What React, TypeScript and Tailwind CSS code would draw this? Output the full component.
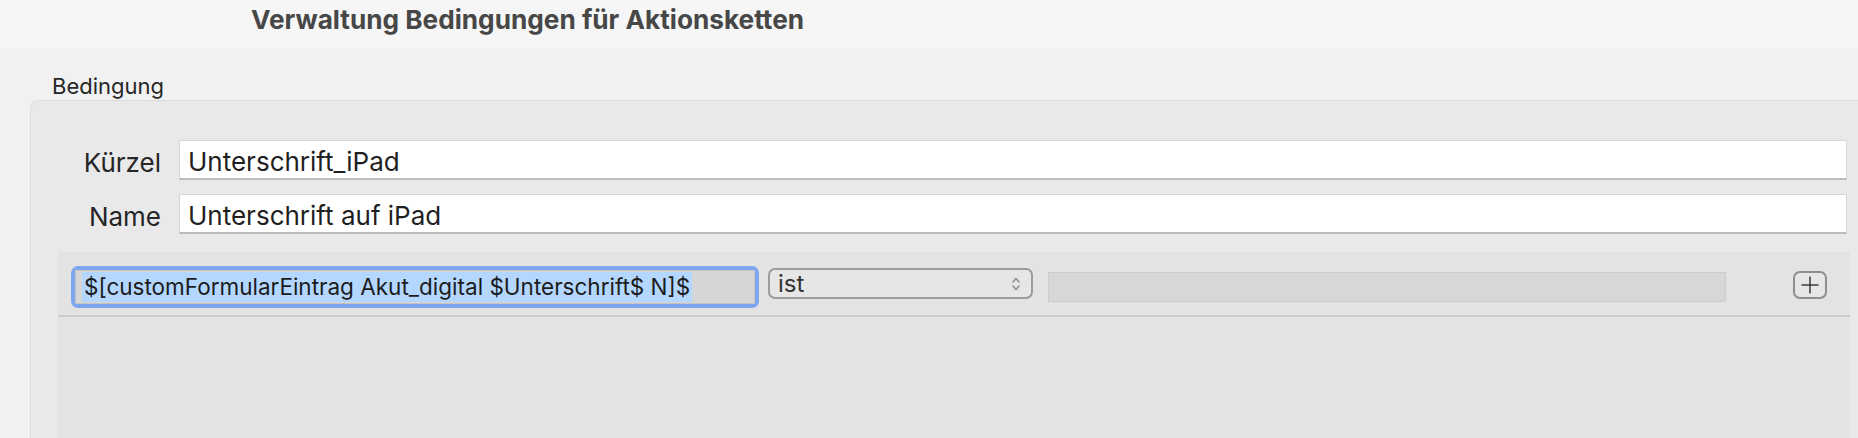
export default function App() {
  return (
    <div className="w-[1858px] h-[438px] overflow-hidden bg-[#f1f1f1] font-['Inter','Liberation_Sans',sans-serif] text-[#262626]">
      <header className="h-[48px] bg-[#f6f6f6] flex items-center pl-[251px] pb-[8px]">
        <h1 className="text-[26.2px] font-bold text-[#474747] leading-none">
          Verwaltung Bedingungen für Aktionsketten
        </h1>
      </header>

      <div className="pl-[52px] mt-[26px] text-[22px] leading-[24px]">Bedingung</div>

      <section className="ml-[30px] mt-[2px] h-[400px] bg-[#e9e9e9] rounded-tl-[8px] border-t border-l border-[#dcdcdc] pt-[39px] pr-[11px]">
        <div className="flex flex-col gap-[14px]">
          <FieldRow label="Kürzel" value="Unterschrift_iPad" />
          <FieldRow label="Name" value="Unterschrift auf iPad" />
        </div>

        <div className="mt-[18px] ml-[27px] mr-[-3px] h-[200px] bg-[#e3e3e3]">
          <div className="h-[65px] flex items-start border-b-2 border-[#cbcbcb]">
            <div className="ml-[13px] mt-[14px] w-[688px] h-[42px] rounded-[7px] bg-[#7ea6ee] p-[4px]">
              <div className="h-full bg-[#d6d6d6] border border-[#c4c4c4] flex items-center pl-[6px]">
                <span className="bg-[#b4d7ff] text-[22.5px] leading-[30px] text-[#1c1c1c] pl-[2px] pr-[2px]">
                  $[customFormularEintrag Akut_digital $Unterschrift$ N]$
                </span>
              </div>
            </div>

            <div className="ml-[9px] mt-[16px] w-[265px] h-[31px] rounded-[7px] border-2 border-[#9b9b9b] bg-[#e6e6e6] flex items-center justify-between pl-[8px] pr-[10px]">
              <span className="text-[24px] leading-none text-[#333333]">ist</span>
              <svg width="10" height="16" viewBox="0 0 10 16" fill="none" stroke="#8a8a8a" strokeWidth="1.4" strokeLinecap="round" strokeLinejoin="round">
                <path d="M2 6 L5 2.5 L8 6" />
                <path d="M2 10 L5 13.5 L8 10" />
              </svg>
            </div>

            <div className="ml-[15px] mt-[20px] w-[678px] h-[30px] bg-[#d7d7d7] border border-[#cccccc]" />

            <button className="ml-[67px] mt-[19px] w-[34px] h-[28px] rounded-[7px] border-2 border-[#8e8e8e] bg-[#e6e6e6] flex items-center justify-center">
              <svg width="20" height="20" viewBox="0 0 20 20" stroke="#222222" strokeWidth="1.3">
                <path d="M10 1.5 V18.5" />
                <path d="M1.5 10 H18.5" />
              </svg>
            </button>
          </div>
        </div>
      </section>
    </div>
  );
}

function FieldRow({ label, value }: { label: string; value: string }) {
  return (
    <div className="flex items-center">
      <label className="w-[148px] pr-[18px] pt-[5px] text-right text-[26px] leading-none text-[#262626]">{label}</label>
      <div className="flex-1 h-[40px] bg-white border-t border-l border-r border-[#d6d6d6] border-b-2 border-b-[#bcbcbc] flex items-center pl-[8px] pt-[5px]">
        <span className="text-[26px] leading-none text-[#1f1f1f]">{value}</span>
      </div>
    </div>
  );
}
